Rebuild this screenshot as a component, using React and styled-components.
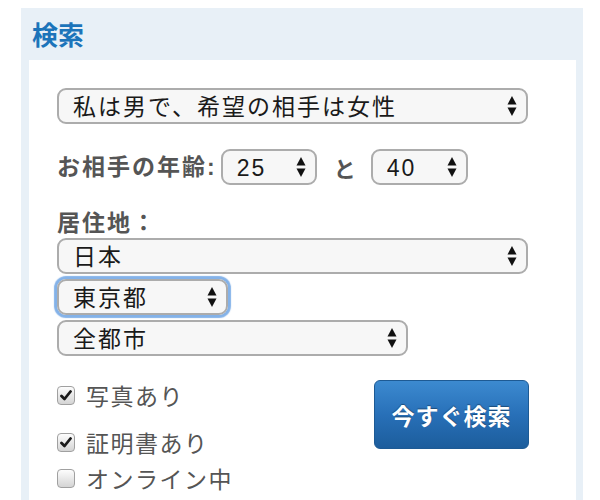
import React from "react";
import styled, { createGlobalStyle } from "styled-components";

const Global = createGlobalStyle`
  html, body { margin: 0; padding: 0; background: #fff; }
  body { font-family: "Liberation Sans", "Noto Sans CJK JP", sans-serif; }
`;

const Panel = styled.div`
  margin: 8px 0 0 21px;
  width: 562px;
  height: 492px;
  background: #e8f0f7;
  display: flex;
  flex-direction: column;
`;

const Header = styled.h2`
  margin: 0;
  height: 52px;
  padding-left: 11px;
  display: flex;
  align-items: center;
  font-size: 26px;
  font-weight: 700;
  color: #1c74ba;
  font-family: "Noto Sans CJK JP", sans-serif;
  line-height: 1;
`;

const Body = styled.div`
  flex: 1;
  margin: 0 7px 0 8px;
  background: #fff;
  padding: 28px 0 0 28px;
  display: flex;
  flex-direction: column;
  align-items: flex-start;
`;

const SelectWrap = styled.div`
  position: relative;
  width: ${(p) => p.$w}px;
  height: 36px;
  border-radius: 9px;
  box-shadow: ${(p) =>
    p.$focus ? "0 0 1px 3px rgba(110, 165, 228, 0.85)" : "none"};
`;

const Select = styled.select`
  appearance: none;
  -webkit-appearance: none;
  width: 100%;
  height: 100%;
  box-sizing: border-box;
  border: 2px solid #acacac;
  border-radius: 9px;
  background: #f7f7f7;
  padding: 2px 30px 0 14px;
  font-family: "Liberation Sans", "Noto Sans CJK JP", sans-serif;
  font-size: 23px;
  letter-spacing: 2px;
  color: #1a1a1a;
  line-height: 30px;
  outline: none;
`;

const Arrows = styled.svg`
  position: absolute;
  right: 11px;
  top: 50%;
  transform: translateY(-50%);
  pointer-events: none;
`;

const Dropdown = ({ w, value, focus }) => (
  <SelectWrap $w={w} $focus={focus}>
    <Select defaultValue={value}>
      <option>{value}</option>
    </Select>
    <Arrows width="10" height="22" viewBox="0 0 10 22">
      <path d="M5 1 L9.5 9.5 L0.5 9.5 Z" fill="#111" />
      <path d="M0.5 12.5 L9.5 12.5 L5 21 Z" fill="#111" />
    </Arrows>
  </SelectWrap>
);

const AgeRow = styled.div`
  margin-top: 25px;
  display: flex;
  align-items: center;
  height: 35px;
`;

const Label = styled.label`
  font-family: "Liberation Sans", "Noto Sans CJK JP", sans-serif;
  font-size: 23px;
  font-weight: 700;
  color: #555;
  letter-spacing: 2px;
  line-height: 30px;
  margin-right: ${(p) => p.$mr || 0}px;
`;

const Sep = styled.span`
  font-family: "Noto Sans CJK JP", sans-serif;
  font-size: 22px;
  font-weight: 700;
  color: #555;
  margin: 0 15px 0 17px;
`;

const LocLabel = styled(Label)`
  display: block;
  margin-top: 24px;
`;

const Stack = styled.div`
  display: flex;
  flex-direction: column;
  gap: 5px;
`;

const Bottom = styled.div`
  margin-top: 24px;
  width: 472px;
  display: flex;
  justify-content: space-between;
  align-items: flex-start;
`;

const Checks = styled.div`
  display: flex;
  flex-direction: column;
  margin-top: -3px;
`;

const CheckRow = styled.label`
  display: flex;
  align-items: center;
  height: 36px;
  margin-top: ${(p) => p.$mt || 0}px;
  font-family: "Noto Sans CJK JP", sans-serif;
  font-size: 23px;
  letter-spacing: 1.5px;
  color: #555;
`;

const Box = styled.span`
  width: 18px;
  height: 19px;
  box-sizing: border-box;
  border: 1px solid #a0a0a0;
  border-radius: 4px;
  background: linear-gradient(#fdfdfd, #d4d4d4);
  margin-right: 11px;
  display: flex;
  align-items: center;
  justify-content: center;
`;

const Check = ({ checked, children, mt }) => (
  <CheckRow $mt={mt}>
    <Box>
      {checked && (
        <svg width="12" height="11" viewBox="0 0 12 11">
          <path d="M1.5 6 L4.5 9 L10.5 1.5" fill="none" stroke="#1a1a1a" strokeWidth="2.8" strokeLinecap="round" strokeLinejoin="round" />
        </svg>
      )}
    </Box>
    {children}
  </CheckRow>
);

const Button = styled.button`
  width: 155px;
  height: 69px;
  border: 1px solid #1d5a94;
  border-radius: 6px;
  background: linear-gradient(#3c8ad0, #2870b8 50%, #1c5d9c);
  color: #fff;
  font-family: "Noto Sans CJK JP", sans-serif;
  font-size: 23px;
  font-weight: 700;
  letter-spacing: 1px;
  text-shadow: 0 -1px 1px rgba(0, 0, 0, 0.35);
  padding: 0;
`;

export default function App() {
  return (
    <>
      <Global />
      <Panel>
        <Header>検索</Header>
        <Body>
          <Dropdown w={471} value="私は男で、希望の相手は女性" />
          <AgeRow>
            <Label $mr={4}>お相手の年齢:</Label>
            <Dropdown w={96} value="25" />
            <Sep>と</Sep>
            <Dropdown w={97} value="40" />
          </AgeRow>
          <LocLabel>居住地：</LocLabel>
          <Stack>
            <Dropdown w={471} value="日本" />
            <Dropdown w={171} value="東京都" focus />
            <Dropdown w={351} value="全都市" />
          </Stack>
          <Bottom>
            <Checks>
              <Check checked>写真あり</Check>
              <Check checked mt={11}>証明書あり</Check>
              <Check>オンライン中</Check>
            </Checks>
            <Button>今すぐ検索</Button>
          </Bottom>
        </Body>
      </Panel>
    </>
  );
}
